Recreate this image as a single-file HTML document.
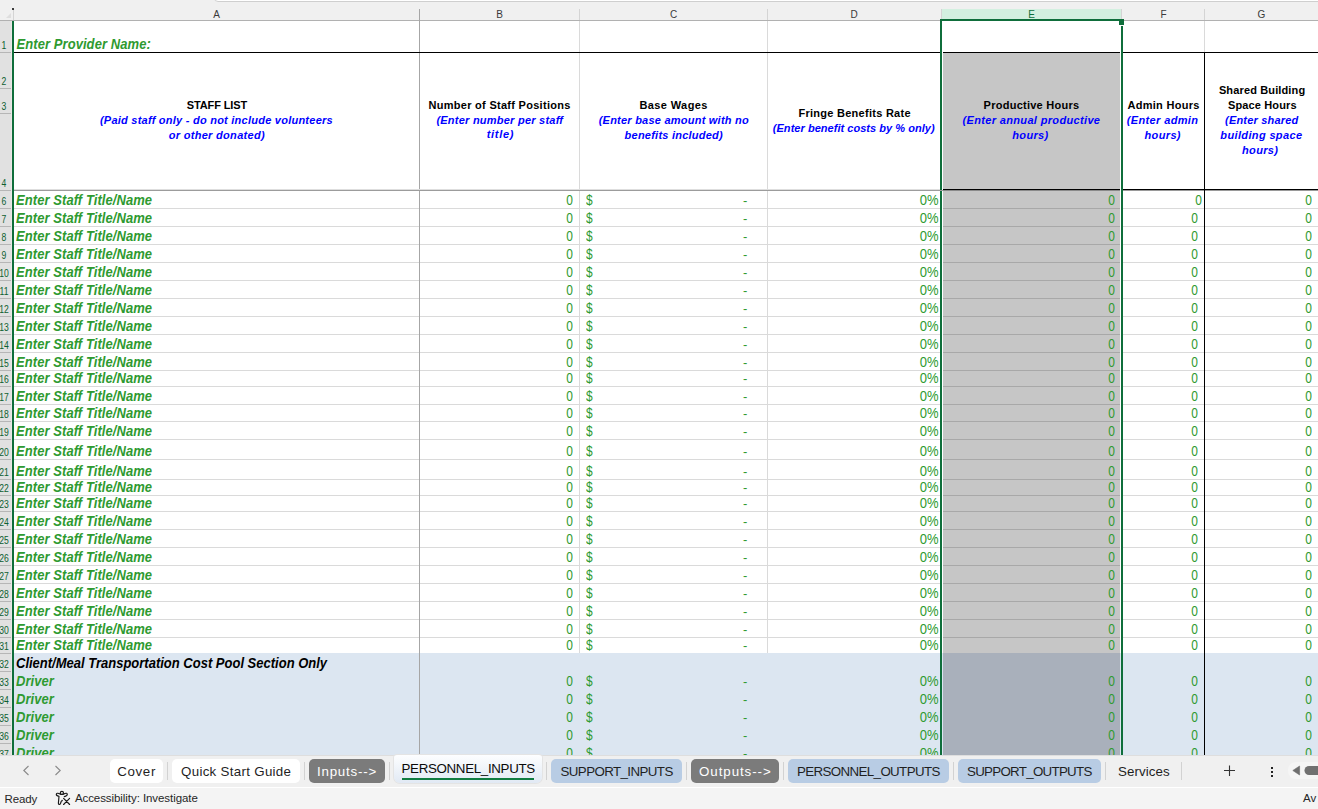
<!DOCTYPE html>
<html><head><meta charset="utf-8"><title>PERSONNEL_INPUTS</title>
<style>
html,body{margin:0;padding:0;width:1318px;height:809px;overflow:hidden;background:#fff;font-family:"Liberation Sans",sans-serif}
#r div, #r svg{position:absolute}
#r{position:absolute;left:0;top:0;width:1318px;height:809px;overflow:hidden}
.c{white-space:pre;line-height:20px}
.t{font:italic bold 13px "Liberation Sans";color:#2e9a30;white-space:nowrap;line-height:15px;letter-spacing:0.07px;transform:scaleY(1.1);transform-origin:0 80%}
.n{font:13px "Liberation Sans";color:#2e9a30;white-space:nowrap;line-height:15px;text-align:right;transform:scale(0.92,1.1);transform-origin:100% 80%}
.d{font:13px "Liberation Sans";color:#2e9a30;white-space:nowrap;line-height:15px}
.ds{transform:scale(0.92,1.1);transform-origin:0 80%}
.pc{transform:scale(1,1.1)}
.tb{border-radius:5px}
.rn{font:10px "Liberation Sans";color:#0d5f30;text-align:center;line-height:12px;width:20px;transform:scaleX(0.86)}
</style></head><body><div id="r">
<div style="left:14px;top:21px;width:1304px;height:734px;background:#fff"></div>
<div style="left:14px;top:653px;width:1304px;height:102px;background:#dce6f1"></div>
<div style="left:943px;top:53px;width:177px;height:137px;background:#c6c6c6"></div>
<div style="left:943px;top:191px;width:177px;height:462px;background:#c6c6c6"></div>
<div style="left:943px;top:653px;width:177px;height:102px;background:#a9b0bb"></div>
<div style="left:14px;top:208px;width:926px;height:1px;background:#dadada"></div>
<div style="left:943px;top:208px;width:177px;height:1px;background:#a8a8a8"></div>
<div style="left:1123px;top:208px;width:195px;height:1px;background:#dadada"></div>
<div style="left:14px;top:226px;width:926px;height:1px;background:#dadada"></div>
<div style="left:943px;top:226px;width:177px;height:1px;background:#a8a8a8"></div>
<div style="left:1123px;top:226px;width:195px;height:1px;background:#dadada"></div>
<div style="left:14px;top:244px;width:926px;height:1px;background:#dadada"></div>
<div style="left:943px;top:244px;width:177px;height:1px;background:#a8a8a8"></div>
<div style="left:1123px;top:244px;width:195px;height:1px;background:#dadada"></div>
<div style="left:14px;top:262px;width:926px;height:1px;background:#dadada"></div>
<div style="left:943px;top:262px;width:177px;height:1px;background:#a8a8a8"></div>
<div style="left:1123px;top:262px;width:195px;height:1px;background:#dadada"></div>
<div style="left:14px;top:280px;width:926px;height:1px;background:#dadada"></div>
<div style="left:943px;top:280px;width:177px;height:1px;background:#a8a8a8"></div>
<div style="left:1123px;top:280px;width:195px;height:1px;background:#dadada"></div>
<div style="left:14px;top:298px;width:926px;height:1px;background:#dadada"></div>
<div style="left:943px;top:298px;width:177px;height:1px;background:#a8a8a8"></div>
<div style="left:1123px;top:298px;width:195px;height:1px;background:#dadada"></div>
<div style="left:14px;top:316px;width:926px;height:1px;background:#dadada"></div>
<div style="left:943px;top:316px;width:177px;height:1px;background:#a8a8a8"></div>
<div style="left:1123px;top:316px;width:195px;height:1px;background:#dadada"></div>
<div style="left:14px;top:334px;width:926px;height:1px;background:#dadada"></div>
<div style="left:943px;top:334px;width:177px;height:1px;background:#a8a8a8"></div>
<div style="left:1123px;top:334px;width:195px;height:1px;background:#dadada"></div>
<div style="left:14px;top:352px;width:926px;height:1px;background:#dadada"></div>
<div style="left:943px;top:352px;width:177px;height:1px;background:#a8a8a8"></div>
<div style="left:1123px;top:352px;width:195px;height:1px;background:#dadada"></div>
<div style="left:14px;top:370px;width:926px;height:1px;background:#dadada"></div>
<div style="left:943px;top:370px;width:177px;height:1px;background:#a8a8a8"></div>
<div style="left:1123px;top:370px;width:195px;height:1px;background:#dadada"></div>
<div style="left:14px;top:386px;width:926px;height:1px;background:#dadada"></div>
<div style="left:943px;top:386px;width:177px;height:1px;background:#a8a8a8"></div>
<div style="left:1123px;top:386px;width:195px;height:1px;background:#dadada"></div>
<div style="left:14px;top:404px;width:926px;height:1px;background:#dadada"></div>
<div style="left:943px;top:404px;width:177px;height:1px;background:#a8a8a8"></div>
<div style="left:1123px;top:404px;width:195px;height:1px;background:#dadada"></div>
<div style="left:14px;top:421px;width:926px;height:1px;background:#dadada"></div>
<div style="left:943px;top:421px;width:177px;height:1px;background:#a8a8a8"></div>
<div style="left:1123px;top:421px;width:195px;height:1px;background:#dadada"></div>
<div style="left:14px;top:439px;width:926px;height:1px;background:#dadada"></div>
<div style="left:943px;top:439px;width:177px;height:1px;background:#a8a8a8"></div>
<div style="left:1123px;top:439px;width:195px;height:1px;background:#dadada"></div>
<div style="left:14px;top:459px;width:926px;height:1px;background:#dadada"></div>
<div style="left:943px;top:459px;width:177px;height:1px;background:#a8a8a8"></div>
<div style="left:1123px;top:459px;width:195px;height:1px;background:#dadada"></div>
<div style="left:14px;top:479px;width:926px;height:1px;background:#dadada"></div>
<div style="left:943px;top:479px;width:177px;height:1px;background:#a8a8a8"></div>
<div style="left:1123px;top:479px;width:195px;height:1px;background:#dadada"></div>
<div style="left:14px;top:495px;width:926px;height:1px;background:#dadada"></div>
<div style="left:943px;top:495px;width:177px;height:1px;background:#a8a8a8"></div>
<div style="left:1123px;top:495px;width:195px;height:1px;background:#dadada"></div>
<div style="left:14px;top:511px;width:926px;height:1px;background:#dadada"></div>
<div style="left:943px;top:511px;width:177px;height:1px;background:#a8a8a8"></div>
<div style="left:1123px;top:511px;width:195px;height:1px;background:#dadada"></div>
<div style="left:14px;top:529px;width:926px;height:1px;background:#dadada"></div>
<div style="left:943px;top:529px;width:177px;height:1px;background:#a8a8a8"></div>
<div style="left:1123px;top:529px;width:195px;height:1px;background:#dadada"></div>
<div style="left:14px;top:547px;width:926px;height:1px;background:#dadada"></div>
<div style="left:943px;top:547px;width:177px;height:1px;background:#a8a8a8"></div>
<div style="left:1123px;top:547px;width:195px;height:1px;background:#dadada"></div>
<div style="left:14px;top:565px;width:926px;height:1px;background:#dadada"></div>
<div style="left:943px;top:565px;width:177px;height:1px;background:#a8a8a8"></div>
<div style="left:1123px;top:565px;width:195px;height:1px;background:#dadada"></div>
<div style="left:14px;top:583px;width:926px;height:1px;background:#dadada"></div>
<div style="left:943px;top:583px;width:177px;height:1px;background:#a8a8a8"></div>
<div style="left:1123px;top:583px;width:195px;height:1px;background:#dadada"></div>
<div style="left:14px;top:601px;width:926px;height:1px;background:#dadada"></div>
<div style="left:943px;top:601px;width:177px;height:1px;background:#a8a8a8"></div>
<div style="left:1123px;top:601px;width:195px;height:1px;background:#dadada"></div>
<div style="left:14px;top:619px;width:926px;height:1px;background:#dadada"></div>
<div style="left:943px;top:619px;width:177px;height:1px;background:#a8a8a8"></div>
<div style="left:1123px;top:619px;width:195px;height:1px;background:#dadada"></div>
<div style="left:14px;top:637px;width:926px;height:1px;background:#dadada"></div>
<div style="left:943px;top:637px;width:177px;height:1px;background:#a8a8a8"></div>
<div style="left:1123px;top:637px;width:195px;height:1px;background:#dadada"></div>
<div style="left:579px;top:21px;width:1px;height:632px;background:#dadada"></div>
<div style="left:767px;top:21px;width:1px;height:632px;background:#dadada"></div>
<div style="left:1204px;top:21px;width:1px;height:31px;background:#dadada"></div>
<div style="left:419px;top:9px;width:1px;height:746px;background:#a6a6a6"></div>
<div style="left:14px;top:189px;width:926px;height:1px;background:#dedede"></div>
<div style="left:14px;top:190px;width:926px;height:1px;background:#9c9c9c"></div>
<div style="left:14px;top:52px;width:926px;height:1px;background:#000"></div>
<div style="left:943px;top:52px;width:177px;height:1px;background:#000"></div>
<div style="left:1123px;top:52px;width:195px;height:1px;background:#000"></div>
<div style="left:943px;top:189px;width:177px;height:1px;background:#000"></div>
<div style="left:1123px;top:189px;width:195px;height:1px;background:#000"></div>
<div style="left:943px;top:190px;width:177px;height:1px;background:#8a8a8a"></div>
<div style="left:1123px;top:190px;width:195px;height:1px;background:#9a9a9a"></div>
<div style="left:1204px;top:52px;width:1px;height:703px;background:#000"></div>
<div class="t" style="left:16.5px;top:37px">Enter Provider Name:</div>
<div class="c" style="left:186.8px;top:95px;font:bold 11px 'Liberation Sans';color:#000;line-height:20px;letter-spacing:-0.133px">STAFF LIST</div>
<div class="c" style="left:99.9px;top:110px;font:italic bold 11px 'Liberation Sans';color:#00f;line-height:20px;letter-spacing:0.244px">(Paid staff only - do not include volunteers</div>
<div class="c" style="left:168.7px;top:125px;font:italic bold 11px 'Liberation Sans';color:#00f;line-height:20px;letter-spacing:0.306px">or other donated)</div>
<div class="c" style="left:428.5px;top:95px;font:bold 11px 'Liberation Sans';color:#000;line-height:20px;letter-spacing:0.283px">Number of Staff Positions</div>
<div class="c" style="left:436.4px;top:110px;font:italic bold 11px 'Liberation Sans';color:#00f;line-height:20px;letter-spacing:0.236px">(Enter number per staff</div>
<div class="c" style="left:486.7px;top:124px;font:italic bold 11px 'Liberation Sans';color:#00f;line-height:20px;letter-spacing:0.7px">title)</div>
<div class="c" style="left:639.4px;top:95px;font:bold 11px 'Liberation Sans';color:#000;line-height:20px;letter-spacing:0.4px">Base Wages</div>
<div class="c" style="left:598.7px;top:110px;font:italic bold 11px 'Liberation Sans';color:#00f;line-height:20px;letter-spacing:0.232px">(Enter base amount with no</div>
<div class="c" style="left:624.6px;top:125px;font:italic bold 11px 'Liberation Sans';color:#00f;line-height:20px;letter-spacing:0.235px">benefits included)</div>
<div class="c" style="left:798.4px;top:103px;font:bold 11px 'Liberation Sans';color:#000;line-height:20px;letter-spacing:0.274px">Fringe Benefits Rate</div>
<div class="c" style="left:772.8px;top:118px;font:italic bold 11px 'Liberation Sans';color:#00f;line-height:20px;letter-spacing:0.037px">(Enter benefit costs by % only)</div>
<div class="c" style="left:983.6px;top:95px;font:bold 11px 'Liberation Sans';color:#000;line-height:20px;letter-spacing:0.253px">Productive Hours</div>
<div class="c" style="left:962.5px;top:110px;font:italic bold 11px 'Liberation Sans';color:#00f;line-height:20px;letter-spacing:0.343px">(Enter annual productive</div>
<div class="c" style="left:1012.3px;top:125px;font:italic bold 11px 'Liberation Sans';color:#00f;line-height:20px;letter-spacing:0.32px">hours)</div>
<div class="c" style="left:1127.5px;top:95px;font:bold 11px 'Liberation Sans';color:#000;line-height:20px;letter-spacing:0.28px">Admin Hours</div>
<div class="c" style="left:1126.7px;top:110px;font:italic bold 11px 'Liberation Sans';color:#00f;line-height:20px;letter-spacing:0.373px">(Enter admin</div>
<div class="c" style="left:1144.5px;top:125px;font:italic bold 11px 'Liberation Sans';color:#00f;line-height:20px;letter-spacing:0.36px">hours)</div>
<div class="c" style="left:1218.9px;top:80px;font:bold 11px 'Liberation Sans';color:#000;line-height:20px;letter-spacing:0.136px">Shared Building</div>
<div class="c" style="left:1228.0px;top:95px;font:bold 11px 'Liberation Sans';color:#000;line-height:20px;letter-spacing:0.13px">Space Hours</div>
<div class="c" style="left:1225.1px;top:110px;font:italic bold 11px 'Liberation Sans';color:#00f;line-height:20px;letter-spacing:0.183px">(Enter shared</div>
<div class="c" style="left:1220.3px;top:125px;font:italic bold 11px 'Liberation Sans';color:#00f;line-height:20px;letter-spacing:0.362px">building space</div>
<div class="c" style="left:1242.1px;top:140px;font:italic bold 11px 'Liberation Sans';color:#00f;line-height:20px;letter-spacing:0.3px">hours)</div>
<div class="t" style="left:16px;top:193px">Enter Staff Title/Name</div>
<div class="n" style="left:500px;top:193px;width:73px">0</div>
<div class="d ds" style="left:586px;top:193px">$</div>
<div class="d" style="left:743px;top:193px">-</div>
<div class="n pc" style="left:880px;top:193px;width:58.6px">0%</div>
<div class="n" style="left:1050px;top:193px;width:65px">0</div>
<div class="n" style="left:1154px;top:193px;width:48px">0</div>
<div class="n" style="left:1250px;top:193px;width:62px">0</div>
<div class="t" style="left:16px;top:211px">Enter Staff Title/Name</div>
<div class="n" style="left:500px;top:211px;width:73px">0</div>
<div class="d ds" style="left:586px;top:211px">$</div>
<div class="d" style="left:743px;top:211px">-</div>
<div class="n pc" style="left:880px;top:211px;width:58.6px">0%</div>
<div class="n" style="left:1050px;top:211px;width:65px">0</div>
<div class="n" style="left:1150px;top:211px;width:48px">0</div>
<div class="n" style="left:1250px;top:211px;width:62px">0</div>
<div class="t" style="left:16px;top:229px">Enter Staff Title/Name</div>
<div class="n" style="left:500px;top:229px;width:73px">0</div>
<div class="d ds" style="left:586px;top:229px">$</div>
<div class="d" style="left:743px;top:229px">-</div>
<div class="n pc" style="left:880px;top:229px;width:58.6px">0%</div>
<div class="n" style="left:1050px;top:229px;width:65px">0</div>
<div class="n" style="left:1150px;top:229px;width:48px">0</div>
<div class="n" style="left:1250px;top:229px;width:62px">0</div>
<div class="t" style="left:16px;top:247px">Enter Staff Title/Name</div>
<div class="n" style="left:500px;top:247px;width:73px">0</div>
<div class="d ds" style="left:586px;top:247px">$</div>
<div class="d" style="left:743px;top:247px">-</div>
<div class="n pc" style="left:880px;top:247px;width:58.6px">0%</div>
<div class="n" style="left:1050px;top:247px;width:65px">0</div>
<div class="n" style="left:1150px;top:247px;width:48px">0</div>
<div class="n" style="left:1250px;top:247px;width:62px">0</div>
<div class="t" style="left:16px;top:265px">Enter Staff Title/Name</div>
<div class="n" style="left:500px;top:265px;width:73px">0</div>
<div class="d ds" style="left:586px;top:265px">$</div>
<div class="d" style="left:743px;top:265px">-</div>
<div class="n pc" style="left:880px;top:265px;width:58.6px">0%</div>
<div class="n" style="left:1050px;top:265px;width:65px">0</div>
<div class="n" style="left:1150px;top:265px;width:48px">0</div>
<div class="n" style="left:1250px;top:265px;width:62px">0</div>
<div class="t" style="left:16px;top:283px">Enter Staff Title/Name</div>
<div class="n" style="left:500px;top:283px;width:73px">0</div>
<div class="d ds" style="left:586px;top:283px">$</div>
<div class="d" style="left:743px;top:283px">-</div>
<div class="n pc" style="left:880px;top:283px;width:58.6px">0%</div>
<div class="n" style="left:1050px;top:283px;width:65px">0</div>
<div class="n" style="left:1150px;top:283px;width:48px">0</div>
<div class="n" style="left:1250px;top:283px;width:62px">0</div>
<div class="t" style="left:16px;top:301px">Enter Staff Title/Name</div>
<div class="n" style="left:500px;top:301px;width:73px">0</div>
<div class="d ds" style="left:586px;top:301px">$</div>
<div class="d" style="left:743px;top:301px">-</div>
<div class="n pc" style="left:880px;top:301px;width:58.6px">0%</div>
<div class="n" style="left:1050px;top:301px;width:65px">0</div>
<div class="n" style="left:1150px;top:301px;width:48px">0</div>
<div class="n" style="left:1250px;top:301px;width:62px">0</div>
<div class="t" style="left:16px;top:319px">Enter Staff Title/Name</div>
<div class="n" style="left:500px;top:319px;width:73px">0</div>
<div class="d ds" style="left:586px;top:319px">$</div>
<div class="d" style="left:743px;top:319px">-</div>
<div class="n pc" style="left:880px;top:319px;width:58.6px">0%</div>
<div class="n" style="left:1050px;top:319px;width:65px">0</div>
<div class="n" style="left:1150px;top:319px;width:48px">0</div>
<div class="n" style="left:1250px;top:319px;width:62px">0</div>
<div class="t" style="left:16px;top:337px">Enter Staff Title/Name</div>
<div class="n" style="left:500px;top:337px;width:73px">0</div>
<div class="d ds" style="left:586px;top:337px">$</div>
<div class="d" style="left:743px;top:337px">-</div>
<div class="n pc" style="left:880px;top:337px;width:58.6px">0%</div>
<div class="n" style="left:1050px;top:337px;width:65px">0</div>
<div class="n" style="left:1150px;top:337px;width:48px">0</div>
<div class="n" style="left:1250px;top:337px;width:62px">0</div>
<div class="t" style="left:16px;top:355px">Enter Staff Title/Name</div>
<div class="n" style="left:500px;top:355px;width:73px">0</div>
<div class="d ds" style="left:586px;top:355px">$</div>
<div class="d" style="left:743px;top:355px">-</div>
<div class="n pc" style="left:880px;top:355px;width:58.6px">0%</div>
<div class="n" style="left:1050px;top:355px;width:65px">0</div>
<div class="n" style="left:1150px;top:355px;width:48px">0</div>
<div class="n" style="left:1250px;top:355px;width:62px">0</div>
<div class="t" style="left:16px;top:371px">Enter Staff Title/Name</div>
<div class="n" style="left:500px;top:371px;width:73px">0</div>
<div class="d ds" style="left:586px;top:371px">$</div>
<div class="d" style="left:743px;top:371px">-</div>
<div class="n pc" style="left:880px;top:371px;width:58.6px">0%</div>
<div class="n" style="left:1050px;top:371px;width:65px">0</div>
<div class="n" style="left:1150px;top:371px;width:48px">0</div>
<div class="n" style="left:1250px;top:371px;width:62px">0</div>
<div class="t" style="left:16px;top:389px">Enter Staff Title/Name</div>
<div class="n" style="left:500px;top:389px;width:73px">0</div>
<div class="d ds" style="left:586px;top:389px">$</div>
<div class="d" style="left:743px;top:389px">-</div>
<div class="n pc" style="left:880px;top:389px;width:58.6px">0%</div>
<div class="n" style="left:1050px;top:389px;width:65px">0</div>
<div class="n" style="left:1150px;top:389px;width:48px">0</div>
<div class="n" style="left:1250px;top:389px;width:62px">0</div>
<div class="t" style="left:16px;top:406px">Enter Staff Title/Name</div>
<div class="n" style="left:500px;top:406px;width:73px">0</div>
<div class="d ds" style="left:586px;top:406px">$</div>
<div class="d" style="left:743px;top:406px">-</div>
<div class="n pc" style="left:880px;top:406px;width:58.6px">0%</div>
<div class="n" style="left:1050px;top:406px;width:65px">0</div>
<div class="n" style="left:1150px;top:406px;width:48px">0</div>
<div class="n" style="left:1250px;top:406px;width:62px">0</div>
<div class="t" style="left:16px;top:424px">Enter Staff Title/Name</div>
<div class="n" style="left:500px;top:424px;width:73px">0</div>
<div class="d ds" style="left:586px;top:424px">$</div>
<div class="d" style="left:743px;top:424px">-</div>
<div class="n pc" style="left:880px;top:424px;width:58.6px">0%</div>
<div class="n" style="left:1050px;top:424px;width:65px">0</div>
<div class="n" style="left:1150px;top:424px;width:48px">0</div>
<div class="n" style="left:1250px;top:424px;width:62px">0</div>
<div class="t" style="left:16px;top:444px">Enter Staff Title/Name</div>
<div class="n" style="left:500px;top:444px;width:73px">0</div>
<div class="d ds" style="left:586px;top:444px">$</div>
<div class="d" style="left:743px;top:444px">-</div>
<div class="n pc" style="left:880px;top:444px;width:58.6px">0%</div>
<div class="n" style="left:1050px;top:444px;width:65px">0</div>
<div class="n" style="left:1150px;top:444px;width:48px">0</div>
<div class="n" style="left:1250px;top:444px;width:62px">0</div>
<div class="t" style="left:16px;top:464px">Enter Staff Title/Name</div>
<div class="n" style="left:500px;top:464px;width:73px">0</div>
<div class="d ds" style="left:586px;top:464px">$</div>
<div class="d" style="left:743px;top:464px">-</div>
<div class="n pc" style="left:880px;top:464px;width:58.6px">0%</div>
<div class="n" style="left:1050px;top:464px;width:65px">0</div>
<div class="n" style="left:1150px;top:464px;width:48px">0</div>
<div class="n" style="left:1250px;top:464px;width:62px">0</div>
<div class="t" style="left:16px;top:480px">Enter Staff Title/Name</div>
<div class="n" style="left:500px;top:480px;width:73px">0</div>
<div class="d ds" style="left:586px;top:480px">$</div>
<div class="d" style="left:743px;top:480px">-</div>
<div class="n pc" style="left:880px;top:480px;width:58.6px">0%</div>
<div class="n" style="left:1050px;top:480px;width:65px">0</div>
<div class="n" style="left:1150px;top:480px;width:48px">0</div>
<div class="n" style="left:1250px;top:480px;width:62px">0</div>
<div class="t" style="left:16px;top:496px">Enter Staff Title/Name</div>
<div class="n" style="left:500px;top:496px;width:73px">0</div>
<div class="d ds" style="left:586px;top:496px">$</div>
<div class="d" style="left:743px;top:496px">-</div>
<div class="n pc" style="left:880px;top:496px;width:58.6px">0%</div>
<div class="n" style="left:1050px;top:496px;width:65px">0</div>
<div class="n" style="left:1150px;top:496px;width:48px">0</div>
<div class="n" style="left:1250px;top:496px;width:62px">0</div>
<div class="t" style="left:16px;top:514px">Enter Staff Title/Name</div>
<div class="n" style="left:500px;top:514px;width:73px">0</div>
<div class="d ds" style="left:586px;top:514px">$</div>
<div class="d" style="left:743px;top:514px">-</div>
<div class="n pc" style="left:880px;top:514px;width:58.6px">0%</div>
<div class="n" style="left:1050px;top:514px;width:65px">0</div>
<div class="n" style="left:1150px;top:514px;width:48px">0</div>
<div class="n" style="left:1250px;top:514px;width:62px">0</div>
<div class="t" style="left:16px;top:532px">Enter Staff Title/Name</div>
<div class="n" style="left:500px;top:532px;width:73px">0</div>
<div class="d ds" style="left:586px;top:532px">$</div>
<div class="d" style="left:743px;top:532px">-</div>
<div class="n pc" style="left:880px;top:532px;width:58.6px">0%</div>
<div class="n" style="left:1050px;top:532px;width:65px">0</div>
<div class="n" style="left:1150px;top:532px;width:48px">0</div>
<div class="n" style="left:1250px;top:532px;width:62px">0</div>
<div class="t" style="left:16px;top:550px">Enter Staff Title/Name</div>
<div class="n" style="left:500px;top:550px;width:73px">0</div>
<div class="d ds" style="left:586px;top:550px">$</div>
<div class="d" style="left:743px;top:550px">-</div>
<div class="n pc" style="left:880px;top:550px;width:58.6px">0%</div>
<div class="n" style="left:1050px;top:550px;width:65px">0</div>
<div class="n" style="left:1150px;top:550px;width:48px">0</div>
<div class="n" style="left:1250px;top:550px;width:62px">0</div>
<div class="t" style="left:16px;top:568px">Enter Staff Title/Name</div>
<div class="n" style="left:500px;top:568px;width:73px">0</div>
<div class="d ds" style="left:586px;top:568px">$</div>
<div class="d" style="left:743px;top:568px">-</div>
<div class="n pc" style="left:880px;top:568px;width:58.6px">0%</div>
<div class="n" style="left:1050px;top:568px;width:65px">0</div>
<div class="n" style="left:1150px;top:568px;width:48px">0</div>
<div class="n" style="left:1250px;top:568px;width:62px">0</div>
<div class="t" style="left:16px;top:586px">Enter Staff Title/Name</div>
<div class="n" style="left:500px;top:586px;width:73px">0</div>
<div class="d ds" style="left:586px;top:586px">$</div>
<div class="d" style="left:743px;top:586px">-</div>
<div class="n pc" style="left:880px;top:586px;width:58.6px">0%</div>
<div class="n" style="left:1050px;top:586px;width:65px">0</div>
<div class="n" style="left:1150px;top:586px;width:48px">0</div>
<div class="n" style="left:1250px;top:586px;width:62px">0</div>
<div class="t" style="left:16px;top:604px">Enter Staff Title/Name</div>
<div class="n" style="left:500px;top:604px;width:73px">0</div>
<div class="d ds" style="left:586px;top:604px">$</div>
<div class="d" style="left:743px;top:604px">-</div>
<div class="n pc" style="left:880px;top:604px;width:58.6px">0%</div>
<div class="n" style="left:1050px;top:604px;width:65px">0</div>
<div class="n" style="left:1150px;top:604px;width:48px">0</div>
<div class="n" style="left:1250px;top:604px;width:62px">0</div>
<div class="t" style="left:16px;top:622px">Enter Staff Title/Name</div>
<div class="n" style="left:500px;top:622px;width:73px">0</div>
<div class="d ds" style="left:586px;top:622px">$</div>
<div class="d" style="left:743px;top:622px">-</div>
<div class="n pc" style="left:880px;top:622px;width:58.6px">0%</div>
<div class="n" style="left:1050px;top:622px;width:65px">0</div>
<div class="n" style="left:1150px;top:622px;width:48px">0</div>
<div class="n" style="left:1250px;top:622px;width:62px">0</div>
<div class="t" style="left:16px;top:638px">Enter Staff Title/Name</div>
<div class="n" style="left:500px;top:638px;width:73px">0</div>
<div class="d ds" style="left:586px;top:638px">$</div>
<div class="d" style="left:743px;top:638px">-</div>
<div class="n pc" style="left:880px;top:638px;width:58.6px">0%</div>
<div class="n" style="left:1050px;top:638px;width:65px">0</div>
<div class="n" style="left:1150px;top:638px;width:48px">0</div>
<div class="n" style="left:1250px;top:638px;width:62px">0</div>
<div class="t" style="left:16px;top:656px;color:#000;letter-spacing:0">Client/Meal Transportation Cost Pool Section Only</div>
<div class="t" style="left:16px;top:674px">Driver</div>
<div class="n" style="left:500px;top:674px;width:73px">0</div>
<div class="d ds" style="left:586px;top:674px">$</div>
<div class="d" style="left:743px;top:674px">-</div>
<div class="n pc" style="left:880px;top:674px;width:58.6px">0%</div>
<div class="n" style="left:1050px;top:674px;width:65px">0</div>
<div class="n" style="left:1150px;top:674px;width:48px">0</div>
<div class="n" style="left:1250px;top:674px;width:62px">0</div>
<div class="t" style="left:16px;top:692px">Driver</div>
<div class="n" style="left:500px;top:692px;width:73px">0</div>
<div class="d ds" style="left:586px;top:692px">$</div>
<div class="d" style="left:743px;top:692px">-</div>
<div class="n pc" style="left:880px;top:692px;width:58.6px">0%</div>
<div class="n" style="left:1050px;top:692px;width:65px">0</div>
<div class="n" style="left:1150px;top:692px;width:48px">0</div>
<div class="n" style="left:1250px;top:692px;width:62px">0</div>
<div class="t" style="left:16px;top:710px">Driver</div>
<div class="n" style="left:500px;top:710px;width:73px">0</div>
<div class="d ds" style="left:586px;top:710px">$</div>
<div class="d" style="left:743px;top:710px">-</div>
<div class="n pc" style="left:880px;top:710px;width:58.6px">0%</div>
<div class="n" style="left:1050px;top:710px;width:65px">0</div>
<div class="n" style="left:1150px;top:710px;width:48px">0</div>
<div class="n" style="left:1250px;top:710px;width:62px">0</div>
<div class="t" style="left:16px;top:728px">Driver</div>
<div class="n" style="left:500px;top:728px;width:73px">0</div>
<div class="d ds" style="left:586px;top:728px">$</div>
<div class="d" style="left:743px;top:728px">-</div>
<div class="n pc" style="left:880px;top:728px;width:58.6px">0%</div>
<div class="n" style="left:1050px;top:728px;width:65px">0</div>
<div class="n" style="left:1150px;top:728px;width:48px">0</div>
<div class="n" style="left:1250px;top:728px;width:62px">0</div>
<div class="t" style="left:16px;top:746px">Driver</div>
<div class="n" style="left:500px;top:746px;width:73px">0</div>
<div class="d ds" style="left:586px;top:746px">$</div>
<div class="d" style="left:743px;top:746px">-</div>
<div class="n pc" style="left:880px;top:746px;width:58.6px">0%</div>
<div class="n" style="left:1050px;top:746px;width:65px">0</div>
<div class="n" style="left:1150px;top:746px;width:48px">0</div>
<div class="n" style="left:1250px;top:746px;width:62px">0</div>
<div style="left:0px;top:0px;width:1318px;height:21px;background:#f0f0f0"></div>
<div style="left:214px;top:-6px;width:1110px;height:6px;background:#fff;border:1px solid #cfcfcf;border-radius:4px"></div>
<div style="left:0px;top:20px;width:1318px;height:1px;background:#b1b1b1"></div>
<div style="left:942px;top:9px;width:179px;height:11px;background:#d3f0e0"></div>
<div style="left:579px;top:9px;width:1px;height:11px;background:#d4d4d4"></div>
<div style="left:767px;top:9px;width:1px;height:11px;background:#d4d4d4"></div>
<div style="left:1204px;top:9px;width:1px;height:11px;background:#d4d4d4"></div>
<div style="left:13px;top:9px;width:1px;height:11px;background:#d4d4d4"></div>
<div style="left:941px;top:9px;width:1px;height:11px;background:#d4d4d4"></div>
<div style="left:1121px;top:9px;width:1px;height:11px;background:#d4d4d4"></div>
<div style="left:419px;top:9px;width:1px;height:12px;background:#a6a6a6"></div>
<div style="left:14px;top:8px;width:405px;font:10px 'Liberation Sans';color:#3a3a3a;text-align:center;line-height:14px">A</div>
<div style="left:420px;top:8px;width:159px;font:10px 'Liberation Sans';color:#3a3a3a;text-align:center;line-height:14px">B</div>
<div style="left:580px;top:8px;width:187px;font:10px 'Liberation Sans';color:#3a3a3a;text-align:center;line-height:14px">C</div>
<div style="left:768px;top:8px;width:172px;font:10px 'Liberation Sans';color:#3a3a3a;text-align:center;line-height:14px">D</div>
<div style="left:942px;top:8px;width:179px;font:10px 'Liberation Sans';color:#0f6e3b;text-align:center;line-height:14px">E</div>
<div style="left:1123px;top:8px;width:81px;font:10px 'Liberation Sans';color:#3a3a3a;text-align:center;line-height:14px">F</div>
<div style="left:1205px;top:8px;width:113px;font:10px 'Liberation Sans';color:#3a3a3a;text-align:center;line-height:14px">G</div>
<svg style="left:6px;top:13px" width="5" height="5"><path d="M5 0 L5 5 L0 5 Z" fill="#dedede"/></svg>
<div style="left:12px;top:8px;width:2px;height:2px;background:#000;border-radius:1px"></div>
<div style="left:0;top:21px;width:11px;height:734px;background:#e1e1e1;overflow:hidden">
<div style="left:0;top:31px;width:11px;height:1px;background:#b6b6b6"></div>
<div class="rn" style="left:-5.9px;top:19px">1</div>
<div style="left:0;top:67px;width:11px;height:1px;background:#b6b6b6"></div>
<div class="rn" style="left:-5.9px;top:55px">2</div>
<div style="left:0;top:92px;width:11px;height:1px;background:#b6b6b6"></div>
<div class="rn" style="left:-5.9px;top:80px">3</div>
<div style="left:0;top:169px;width:11px;height:1px;background:#b6b6b6"></div>
<div class="rn" style="left:-5.9px;top:157px">4</div>
<div style="left:0;top:187px;width:11px;height:1px;background:#b6b6b6"></div>
<div class="rn" style="left:-5.9px;top:175px">6</div>
<div style="left:0;top:205px;width:11px;height:1px;background:#b6b6b6"></div>
<div class="rn" style="left:-5.9px;top:193px">7</div>
<div style="left:0;top:223px;width:11px;height:1px;background:#b6b6b6"></div>
<div class="rn" style="left:-5.9px;top:211px">8</div>
<div style="left:0;top:241px;width:11px;height:1px;background:#b6b6b6"></div>
<div class="rn" style="left:-5.9px;top:229px">9</div>
<div style="left:0;top:259px;width:11px;height:1px;background:#b6b6b6"></div>
<div class="rn" style="left:-5.9px;top:247px">10</div>
<div style="left:0;top:277px;width:11px;height:1px;background:#b6b6b6"></div>
<div class="rn" style="left:-5.9px;top:265px">11</div>
<div style="left:0;top:295px;width:11px;height:1px;background:#b6b6b6"></div>
<div class="rn" style="left:-5.9px;top:283px">12</div>
<div style="left:0;top:313px;width:11px;height:1px;background:#b6b6b6"></div>
<div class="rn" style="left:-5.9px;top:301px">13</div>
<div style="left:0;top:331px;width:11px;height:1px;background:#b6b6b6"></div>
<div class="rn" style="left:-5.9px;top:319px">14</div>
<div style="left:0;top:349px;width:11px;height:1px;background:#b6b6b6"></div>
<div class="rn" style="left:-5.9px;top:337px">15</div>
<div style="left:0;top:365px;width:11px;height:1px;background:#b6b6b6"></div>
<div class="rn" style="left:-5.9px;top:353px">16</div>
<div style="left:0;top:383px;width:11px;height:1px;background:#b6b6b6"></div>
<div class="rn" style="left:-5.9px;top:371px">17</div>
<div style="left:0;top:400px;width:11px;height:1px;background:#b6b6b6"></div>
<div class="rn" style="left:-5.9px;top:388px">18</div>
<div style="left:0;top:418px;width:11px;height:1px;background:#b6b6b6"></div>
<div class="rn" style="left:-5.9px;top:406px">19</div>
<div style="left:0;top:438px;width:11px;height:1px;background:#b6b6b6"></div>
<div class="rn" style="left:-5.9px;top:426px">20</div>
<div style="left:0;top:458px;width:11px;height:1px;background:#b6b6b6"></div>
<div class="rn" style="left:-5.9px;top:446px">21</div>
<div style="left:0;top:474px;width:11px;height:1px;background:#b6b6b6"></div>
<div class="rn" style="left:-5.9px;top:462px">22</div>
<div style="left:0;top:490px;width:11px;height:1px;background:#b6b6b6"></div>
<div class="rn" style="left:-5.9px;top:478px">23</div>
<div style="left:0;top:508px;width:11px;height:1px;background:#b6b6b6"></div>
<div class="rn" style="left:-5.9px;top:496px">24</div>
<div style="left:0;top:526px;width:11px;height:1px;background:#b6b6b6"></div>
<div class="rn" style="left:-5.9px;top:514px">25</div>
<div style="left:0;top:544px;width:11px;height:1px;background:#b6b6b6"></div>
<div class="rn" style="left:-5.9px;top:532px">26</div>
<div style="left:0;top:562px;width:11px;height:1px;background:#b6b6b6"></div>
<div class="rn" style="left:-5.9px;top:550px">27</div>
<div style="left:0;top:580px;width:11px;height:1px;background:#b6b6b6"></div>
<div class="rn" style="left:-5.9px;top:568px">28</div>
<div style="left:0;top:598px;width:11px;height:1px;background:#b6b6b6"></div>
<div class="rn" style="left:-5.9px;top:586px">29</div>
<div style="left:0;top:616px;width:11px;height:1px;background:#b6b6b6"></div>
<div class="rn" style="left:-5.9px;top:604px">30</div>
<div style="left:0;top:632px;width:11px;height:1px;background:#b6b6b6"></div>
<div class="rn" style="left:-5.9px;top:620px">31</div>
<div style="left:0;top:650px;width:11px;height:1px;background:#b6b6b6"></div>
<div class="rn" style="left:-5.9px;top:638px">32</div>
<div style="left:0;top:668px;width:11px;height:1px;background:#b6b6b6"></div>
<div class="rn" style="left:-5.9px;top:656px">33</div>
<div style="left:0;top:686px;width:11px;height:1px;background:#b6b6b6"></div>
<div class="rn" style="left:-5.9px;top:674px">34</div>
<div style="left:0;top:704px;width:11px;height:1px;background:#b6b6b6"></div>
<div class="rn" style="left:-5.9px;top:692px">35</div>
<div style="left:0;top:722px;width:11px;height:1px;background:#b6b6b6"></div>
<div class="rn" style="left:-5.9px;top:710px">36</div>
<div class="rn" style="left:-5.9px;top:728px">37</div>
</div>
<div style="left:11px;top:21px;width:1px;height:734px;background:#ebe6e6"></div>
<div style="left:12px;top:21px;width:2px;height:734px;background:#0f6e3b"></div>
<div style="left:940px;top:19px;width:2px;height:736px;background:#0f6e3b"></div>
<div style="left:940px;top:19px;width:182px;height:2px;background:#0f6e3b"></div>
<div style="left:1121px;top:26px;width:2px;height:729px;background:#0f6e3b"></div>
<div style="left:1119px;top:19px;width:5px;height:6px;background:#0f6e3b"></div>
<div style="left:940px;top:190px;width:3px;height:1px;background:#9c9c9c"></div>
<div style="left:0px;top:755px;width:1318px;height:32px;background:#f0f0f0"></div>
<div style="left:0px;top:755px;width:1318px;height:1px;background:#dedede"></div>
<div style="left:0px;top:787px;width:1318px;height:22px;background:#f4f4f4"></div>
<div style="left:0px;top:787px;width:1318px;height:1px;background:#ffffff"></div>
<svg style="left:20px;top:763px" width="12" height="16"><path d="M8.5 3 L3.8 7.5 L8.5 12" stroke="#8a8a8a" stroke-width="1.1" fill="none"/></svg>
<svg style="left:52px;top:763px" width="12" height="16"><path d="M3.5 3 L8.2 7.5 L3.5 12" stroke="#8a8a8a" stroke-width="1.1" fill="none"/></svg>
<div class="tb" style="left:110px;top:759px;width:53px;height:24px;background:#fff"></div>
<div style="left:167px;top:762px;width:1px;height:18px;background:#d2d2d2"></div>
<div class="tb" style="left:172px;top:759px;width:128px;height:24px;background:#fff"></div>
<div style="left:304px;top:762px;width:1px;height:18px;background:#d2d2d2"></div>
<div class="tb" style="left:309px;top:759px;width:76px;height:24px;background:#7b7b7b"></div>
<div style="left:389px;top:762px;width:1px;height:18px;background:#d2d2d2"></div>
<div class="tb" style="left:394px;top:755px;width:148px;height:28px;background:linear-gradient(#fdfeff,#e1e9f4);box-shadow:0 0 0 1px #e4e4e4;border-radius:3px 3px 6px 6px"></div>
<div style="left:402px;top:778px;width:132px;height:2px;background:#107c41"></div>
<div style="left:546px;top:762px;width:1px;height:18px;background:#d2d2d2"></div>
<div class="tb" style="left:551px;top:759px;width:131px;height:24px;background:#b8cce4"></div>
<div style="left:686px;top:762px;width:1px;height:18px;background:#d2d2d2"></div>
<div class="tb" style="left:691px;top:759px;width:88px;height:24px;background:#7b7b7b"></div>
<div style="left:783px;top:762px;width:1px;height:18px;background:#d2d2d2"></div>
<div class="tb" style="left:788px;top:759px;width:161px;height:24px;background:#b8cce4"></div>
<div style="left:953px;top:762px;width:1px;height:18px;background:#d2d2d2"></div>
<div class="tb" style="left:958px;top:759px;width:143px;height:24px;background:#b8cce4"></div>
<div style="left:1105px;top:762px;width:1px;height:18px;background:#d2d2d2"></div>
<div style="left:1181px;top:762px;width:1px;height:18px;background:#d2d2d2"></div>
<div class="c" style="left:117.2px;top:762px;font:13.33px 'Liberation Sans';color:#1f1f1f;line-height:20px;letter-spacing:0.65px">Cover</div>
<div class="c" style="left:181.0px;top:762px;font:13.33px 'Liberation Sans';color:#1f1f1f;line-height:20px;letter-spacing:0.3px">Quick Start Guide</div>
<div class="c" style="left:317.0px;top:762px;font:13.33px 'Liberation Sans';color:#ffffff;line-height:20px;letter-spacing:0.775px">Inputs--&gt;</div>
<div class="c" style="left:401.5px;top:759px;font:13.33px 'Liberation Sans';color:#0a0a0a;line-height:20px;letter-spacing:-0.32px">PERSONNEL_INPUTS</div>
<div class="c" style="left:560.5px;top:762px;font:13.33px 'Liberation Sans';color:#1f1f1f;line-height:20px;letter-spacing:-0.592px">SUPPORT_INPUTS</div>
<div class="c" style="left:699.0px;top:762px;font:13.33px 'Liberation Sans';color:#ffffff;line-height:20px;letter-spacing:0.933px">Outputs--&gt;</div>
<div class="c" style="left:797.0px;top:762px;font:13.33px 'Liberation Sans';color:#1f1f1f;line-height:20px;letter-spacing:-0.625px">PERSONNEL_OUTPUTS</div>
<div class="c" style="left:967.0px;top:762px;font:13.33px 'Liberation Sans';color:#1f1f1f;line-height:20px;letter-spacing:-0.714px">SUPPORT_OUTPUTS</div>
<div class="c" style="left:1118.0px;top:762px;font:13.33px 'Liberation Sans';color:#1f1f1f;line-height:20px;letter-spacing:0.086px">Services</div>
<div class="c" style="left:4.6px;top:789px;font:11.5px 'Liberation Sans';color:#262626;line-height:20px;letter-spacing:-0.15px">Ready</div>
<div class="c" style="left:74.9px;top:788px;font:11.5px 'Liberation Sans';color:#262626;line-height:20px;letter-spacing:-0.068px">Accessibility: Investigate</div>
<svg style="left:1221px;top:762px" width="16" height="16"><path d="M8.5 3.5 V14 M3 8.5 H14" stroke="#333" stroke-width="1.1"/></svg>
<svg style="left:1268px;top:762px" width="8" height="18"><rect x="3" y="5" width="2" height="2" fill="#222"/><rect x="3" y="9" width="2" height="2" fill="#222"/><rect x="3" y="13" width="2" height="2" fill="#222"/></svg>
<div style="left:1288px;top:762px;width:40px;height:17px;background:#f5f5f5;border-radius:8px"></div>
<svg style="left:1290px;top:762px" width="30" height="16"><path d="M2.8 8.5 L9.6 4 L9.6 13 Z" fill="#6e6e6e" stroke="#6e6e6e" stroke-width="0.6" stroke-linejoin="round"/><rect x="14.5" y="4" width="20" height="9" rx="4.5" fill="#707070"/></svg>
<svg style="left:52px;top:788px" width="22" height="20"><g fill="none" stroke="#1a1a1a" stroke-width="1.15" stroke-linecap="round" stroke-linejoin="round"><circle cx="9.9" cy="4.9" r="1.6"/><path d="M12.3 8.6 C13.6 8.3 15.3 7.6 15.3 6.3 C15.2 5.2 14 5 13 5.5 C11.5 6.3 8.3 6.3 6.8 5.5 C5.8 5 4.4 5.2 4.3 6.3 C4.2 7.6 5.6 8.1 7 8.4 L6.4 15 C6.2 16.4 7.8 16.9 8.4 15.8 L9.3 13.3"/><path d="M11.6 10.3 L17.6 16.5 M17.6 10.3 L11.6 16.5"/></g><circle cx="10.1" cy="12.6" r="0.8" fill="#1a1a1a"/></svg>
<div class="c" style="left:1303px;top:788px;font:11.5px 'Liberation Sans';line-height:20px;color:#262626">Av</div>
</div></body></html>
